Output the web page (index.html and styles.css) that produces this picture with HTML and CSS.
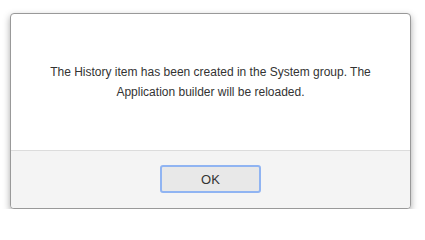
FILE: index.html
```html
<!DOCTYPE html>
<html>
<head>
<meta charset="utf-8">
<link rel="stylesheet" href="styles.css">
</head>
<body>
<div class="dialog">
  <div class="dialog-body">
    <p class="message">The History item has been created in the System group. The Application builder will be reloaded.</p>
  </div>
  <div class="dialog-footer">
    <button class="btn-ok">OK</button>
  </div>
</div>
</body>
</html>
```
FILE: styles.css
```css
html, body {
  margin: 0;
  padding: 0;
  background: #fff;
}
body {
  font-family: "Liberation Sans", Arial, sans-serif;
  padding: 13px 14px 0 10px;
}
.dialog {
  width: 399px;
  border: 1px solid #999;
  border-radius: 4px;
  box-shadow: 0 3px 7px rgba(0,0,0,0.35);
  overflow: hidden;
  background: #fff;
}
.dialog-body {
  height: 136px;
  display: flex;
  align-items: center;
  justify-content: center;
  padding: 0 30px;
  box-sizing: border-box;
}
.message {
  margin: 0;
  font-size: 12px;
  line-height: 20px;
  color: #333;
  text-align: center;
}
.dialog-footer {
  border-top: 1px solid #dcdcdc;
  background: #f4f4f4;
  height: 57px;
  display: flex;
  align-items: center;
  justify-content: center;
}
.btn-ok {
  width: 101px;
  height: 28px;
  border: 2px solid #90b4f2;
  border-radius: 3px;
  background: #e8e8e8;
  font-family: "Liberation Sans", Arial, sans-serif;
  font-size: 13px;
  color: #333;
  margin-top: -1px;
}
```
